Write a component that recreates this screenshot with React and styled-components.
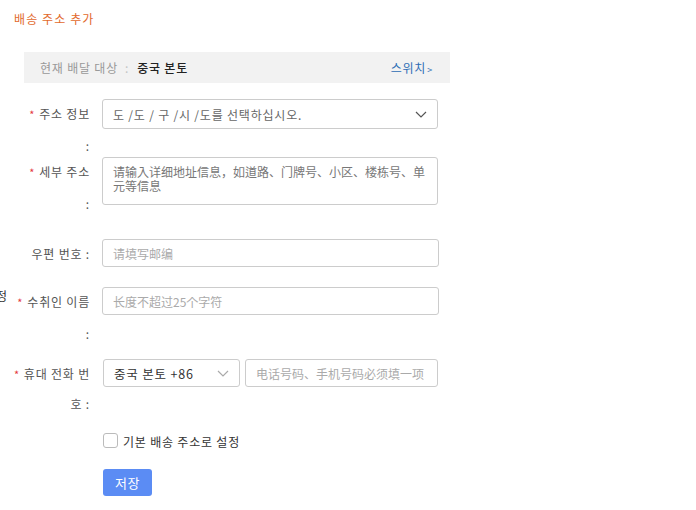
import React from 'react';
import styled, { createGlobalStyle } from 'styled-components';

const GlobalStyle = createGlobalStyle`
    html, body {
        margin: 0;
        padding: 0;
        background: #fff;
        overflow: hidden;
    }
    body {
        font-family: "Noto Sans CJK KR", "Noto Sans CJK SC", "Noto Sans", sans-serif;
        font-size: 12px;
        letter-spacing: 0.8px;
        color: #555;
    }
`;

const Chevron = ({ color }) => (
    <svg width="12" height="7" viewBox="0 0 12 7">
        <path d="M1 1 L6 6 L11 1" fill="none" stroke={color} strokeWidth="1.2" />
    </svg>
);

const App = () => {
    const [isDefault, setIsDefault] = React.useState(false);

    return (
        <Page>
            <GlobalStyle />
            <Title>배송 주소 추가</Title>
            <Banner>
                <BannerLabel>현재 배달 대상</BannerLabel>
                <BannerColon>:</BannerColon>
                <BannerValue>중국 본토</BannerValue>
                <SwitchLink>스위치<small>&gt;</small></SwitchLink>
            </Banner>

            <Form>
                <Row height={58}>
                    <Label>
                        <Line><Star>*</Star>주소 정보</Line>
                        <Line>:</Line>
                    </Label>
                    <Select>
                        <span>도 /도 / 구 /시 /도를 선택하십시오.</span>
                        <Chevron color="#555" />
                    </Select>
                </Row>
                <Row height={82}>
                    <Label>
                        <Line><Star>*</Star>세부 주소</Line>
                        <Line>:</Line>
                    </Label>
                    <TextArea placeholder="请输入详细地址信息，如道路、门牌号、小区、楼栋号、单元等信息" />
                </Row>
                <Row height={48}>
                    <Label>
                        <Line>우편 번호 :</Line>
                    </Label>
                    <Input placeholder="请填写邮编" />
                </Row>
                <Row height={72}>
                    <Stray>정</Stray>
                    <Label>
                        <Line><Star>*</Star>수취인 이름</Line>
                        <Line>:</Line>
                    </Label>
                    <Input placeholder="长度不超过25个字符" />
                </Row>
                <Row height={72}>
                    <Label>
                        <Line><Star>*</Star>휴대 전화 번</Line>
                        <Line short>호 :</Line>
                    </Label>
                    <PhoneGroup>
                        <PhoneSelect>
                            <span>중국 본토 +86</span>
                            <Chevron color="#aaa" />
                        </PhoneSelect>
                        <PhoneInput placeholder="电话号码、手机号码必须填一项" />
                    </PhoneGroup>
                </Row>
                <Row height={38}>
                    <Label />
                    <CheckRow onClick={() => setIsDefault(!isDefault)}>
                        <CheckBox checked={isDefault} />
                        <CheckText>기본 배송 주소로 설정</CheckText>
                    </CheckRow>
                </Row>
                <Row height={30}>
                    <Label />
                    <SaveButton>저장</SaveButton>
                </Row>
            </Form>
        </Page>
    );
};

const Page = styled.div`
    width: 696px;
    height: 510px;
    box-sizing: border-box;
    padding-top: 10px;
    position: relative;
`;

const Title = styled.div`
    margin-left: 14px;
    height: 18px;
    line-height: 18px;
    color: #e2692c;
    font-size: 12px;
    letter-spacing: 1.1px;
`;

const Banner = styled.div`
    margin: 24px 0 0 24px;
    width: 426px;
    height: 31px;
    background: #f2f2f2;
    display: flex;
    align-items: center;
    padding: 0 17px 0 16px;
    box-sizing: border-box;
`;

const BannerLabel = styled.span`
    color: #999;
`;

const BannerColon = styled.span`
    color: #c4c4c4;
    margin: 0 8px 0 7px;
`;

const BannerValue = styled.span`
    color: #222;
    font-weight: 500;
`;

const SwitchLink = styled.a`
    margin-left: auto;
    color: #2d6cb5;
    cursor: pointer;
    small {
        font-size: 9px;
        margin-left: 1px;
    }
`;

const Form = styled.div`
    margin-top: 16px;
`;

const Row = styled.div`
    display: flex;
    align-items: flex-start;
    height: ${p => p.height}px;
    position: relative;
`;

const Label = styled.div`
    width: 92px;
    flex: none;
    box-sizing: border-box;
    padding-right: 2px;
    margin-right: 10px;
    text-align: right;
    color: #555;
    margin-top: -1px;
`;

const Line = styled.div`
    line-height: ${p => (p.short ? '28px' : '31px')};
    white-space: nowrap;
`;

const Star = styled.span`
    color: #e4393c;
    font-size: 11px;
    margin-right: 4px;
`;

const Stray = styled.span`
    position: absolute;
    left: -4px;
    top: 0;
    line-height: 18px;
    color: #333;
    font-size: 12px;
`;

const Field = `
    box-sizing: border-box;
    border: 1px solid #ccc;
    border-radius: 3px;
    background: #fff;
    font-family: inherit;
    font-size: 12px;
    outline: none;
`;

const Select = styled.div`
    ${Field}
    width: 336px;
    height: 30px;
    display: flex;
    align-items: center;
    justify-content: space-between;
    padding: 0 10px 0 10px;
    color: #666;
`;

const TextArea = styled.textarea`
    ${Field}
    width: 336px;
    height: 48px;
    resize: none;
    padding: 7px 10px;
    line-height: 14px;
    letter-spacing: 0;
    color: #333;
    &::placeholder {
        color: #777;
    }
`;

const Input = styled.input`
    ${Field}
    width: 337px;
    height: 28px;
    padding: 0 10px;
    letter-spacing: 0;
    color: #333;
    &::placeholder {
        color: #aaa;
    }
`;

const PhoneGroup = styled.div`
    display: flex;
    gap: 5px;
    width: 335px;
    margin-left: 1px;
`;

const PhoneInput = styled(Input)`
    width: auto;
    flex: 1;
    min-width: 0;
`;

const PhoneSelect = styled.div`
    ${Field}
    width: 137px;
    height: 28px;
    flex: none;
    display: flex;
    align-items: center;
    justify-content: space-between;
    padding: 0 10px;
    color: #333;
    font-size: 12.5px;
`;

const CheckRow = styled.label`
    display: flex;
    align-items: center;
    margin-left: 1px;
    cursor: pointer;
    color: #333;
`;

const CheckBox = styled.div`
    width: 15px;
    height: 15px;
    box-sizing: border-box;
    border: 1px solid #bbb;
    border-radius: 3px;
    background: ${p => (p.checked ? '#5b8ef6' : '#fff')};
`;

const CheckText = styled.span`
    margin-left: 5px;
    line-height: 16px;
    margin-top: 3px;
`;

const SaveButton = styled.button`
    margin-left: 1px;
    width: 49px;
    height: 27px;
    border: none;
    border-radius: 3px;
    background: #5b8cf4;
    color: #fff;
    font-family: inherit;
    font-size: 13px;
    letter-spacing: 0.5px;
    cursor: pointer;
`;

export default App;
